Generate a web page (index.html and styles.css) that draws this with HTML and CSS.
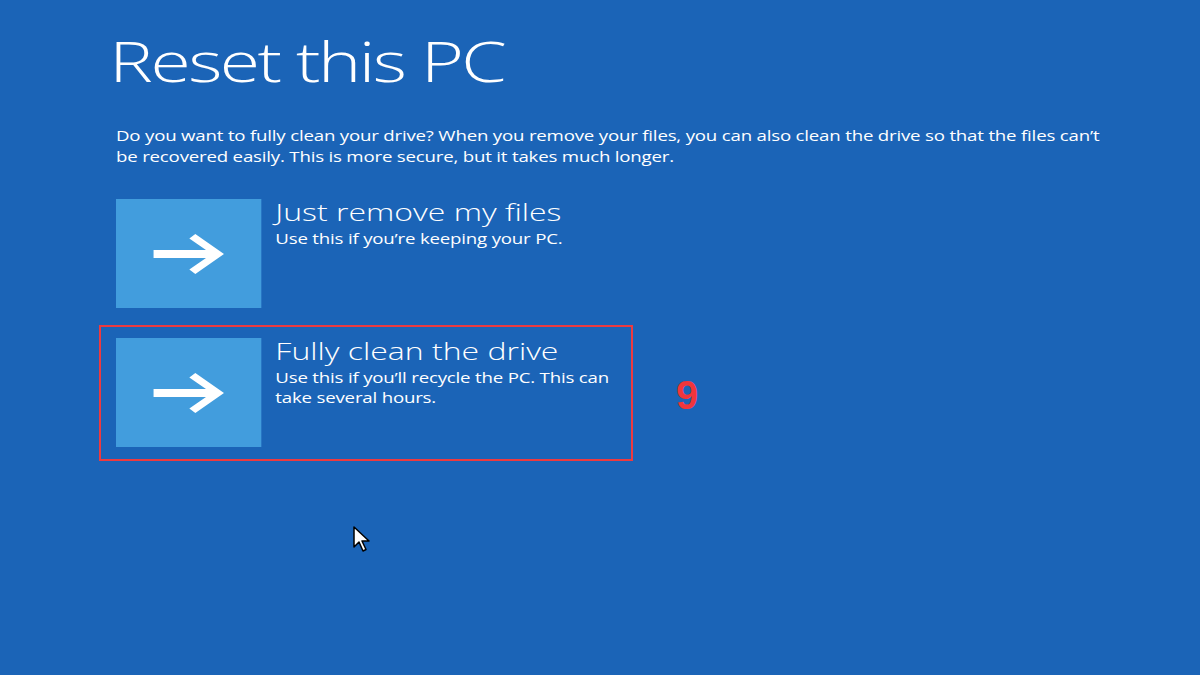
FILE: index.html
```html
<!DOCTYPE html>
<html>
<head>
<meta charset="utf-8">
<link rel="stylesheet" href="styles.css">
</head>
<body>
<main class="page">
  <section class="screen">
    <h1 class="title">Reset this PC</h1>
    <p class="intro">Do you want to fully clean your drive? When you remove your files, you can also clean the drive so that the files can’t be recovered easily. This is more secure, but it takes much longer.</p>
    <div class="options">
      <div class="option">
        <div class="tile">
          <svg class="arrow" width="53" height="40" viewBox="0 0 53 40"><path d="M0 16H39.5L27 4.5L31.5 0L53 20L31.5 40L27 35.5L39.5 24H0Z" fill="#fff"/></svg>
        </div>
        <div class="text">
          <div class="opt-title">Just remove my files</div>
          <div class="opt-desc">Use this if you’re keeping your PC.</div>
        </div>
      </div>
      <div class="option">
        <div class="tile">
          <svg class="arrow" width="53" height="40" viewBox="0 0 53 40"><path d="M0 16H39.5L27 4.5L31.5 0L53 20L31.5 40L27 35.5L39.5 24H0Z" fill="#fff"/></svg>
        </div>
        <div class="text">
          <div class="opt-title">Fully clean the drive</div>
          <div class="opt-desc">Use this if you’ll recycle the PC. This can take several hours.</div>
        </div>
      </div>
    </div>
  </section>
  <div class="highlight"></div>
  <div class="step">9</div>
  <svg class="cursor" width="22" height="28" viewBox="0 0 22 28"><path d="M1 1V21L6 16L10 25L13 23.5L9 15H16Z" fill="#fff" stroke="#000" stroke-width="1.5" stroke-linejoin="round"/></svg>
</main>
</body>
</html>
```
FILE: styles.css
```css
html, body {
  margin: 0;
  padding: 0;
  width: 1200px;
  height: 675px;
  overflow: hidden;
  background: #1b64b7;
}
.page {
  position: relative;
  width: 1200px;
  height: 675px;
  color: #fff;
  font-family: "Open Sans", "Noto Sans", sans-serif;
}
/* The captured screen is a 4:3 display stretched to 16:9 */
.screen {
  width: 900px;
  height: 675px;
  box-sizing: border-box;
  padding: 26px 0 0 87px;
  transform: scaleX(1.33333);
  transform-origin: 0 0;
}
.title {
  margin: 0 0 0 -5px;
  font-weight: 300;
  font-size: 55px;
  line-height: 70px;
  letter-spacing: -1.9px;
}
.intro {
  margin: 29px 0 0 0;
  width: 752px;
  font-size: 14px;
  line-height: 21px;
  letter-spacing: -0.15px;
}
.options {
  margin: 32px 0 0 0;
  display: flex;
  flex-direction: column;
  gap: 30px;
}
.option {
  display: flex;
  gap: 10.5px;
}
.tile {
  width: 109px;
  height: 109px;
  background: #429ddd;
  display: flex;
  align-items: center;
  justify-content: center;
}
.text {
  width: 258px;
  margin-top: -4px;
}
.opt-title {
  font-weight: 300;
  font-size: 24px;
  line-height: 34px;
}
.opt-desc {
  font-size: 14px;
  line-height: 20px;
  letter-spacing: -0.15px;
}
.highlight {
  position: absolute;
  left: 99px;
  top: 325px;
  width: 534px;
  height: 136px;
  box-sizing: border-box;
  border: 2px solid #ee3a3f;
}
.step {
  position: absolute;
  left: 676px;
  top: 372px;
  font-family: "Liberation Sans", Arial, sans-serif;
  font-weight: 700;
  font-size: 40px;
  line-height: 46px;
  color: #f0363c;
}
.cursor {
  position: absolute;
  left: 353px;
  top: 526px;
}
```
